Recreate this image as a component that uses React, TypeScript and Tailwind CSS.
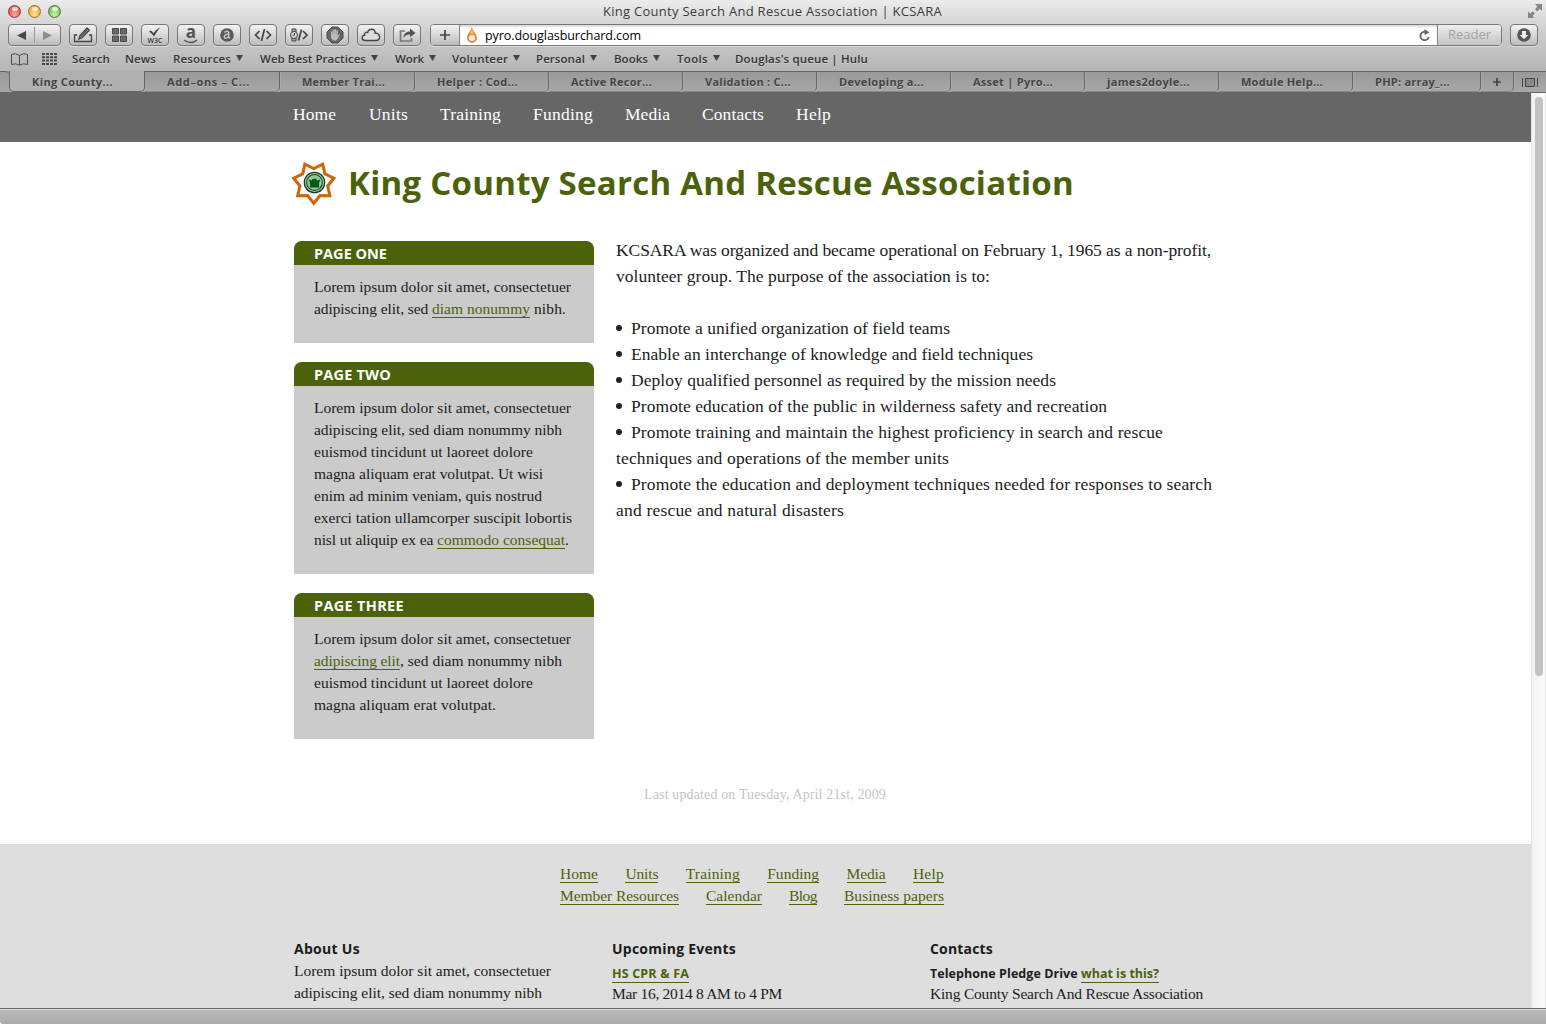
import React, { useLayoutEffect, useRef } from 'react';

/* Single line of text whose tracking is adjusted so that it spans w pixels. */
function Fit({ w, className = '', children }: { w: number; className?: string; children: React.ReactNode }) {
  const ref = useRef<HTMLSpanElement>(null);
  useLayoutEffect(() => {
    const el = ref.current!;
    const apply = () => {
      el.style.letterSpacing = '0px';
      const natural = el.getBoundingClientRect().width;
      const count = (el.textContent || '').length;
      el.style.letterSpacing = (w - natural) / count + 'px';
    };
    apply();
    document.fonts.ready.then(apply);
  }, [w]);
  return (
    <span ref={ref} className={`inline-block whitespace-pre ${className}`}>
      {children}
    </span>
  );
}

const serif = "font-['Liberation_Serif',serif]";
const sans = "font-['Open_Sans','Noto_Sans',sans-serif]";
const link = 'relative text-[#4b620b] after:absolute after:left-0 after:right-0 after:bottom-[2px] after:h-px after:bg-[#4b620b]';

function Tool({ children }: { children: React.ReactNode }) {
  return (
    <div className="mr-2 flex h-[22px] w-7 shrink-0 items-center justify-center rounded-[4px] border border-[#777] bg-linear-to-b from-[#f3f3f3] to-[#bcbcbc] text-[#444] shadow-[0_1px_0_#ddd]">
      {children}
    </div>
  );
}

const bookmarks: [string, number, number, boolean][] = [
  ['Search', 72, 38, false],
  ['News', 125, 31, false],
  ['Resources', 173, 58, true],
  ['Web Best Practices', 260, 106, true],
  ['Work', 395, 29, true],
  ['Volunteer', 452, 56, true],
  ['Personal', 536, 49, true],
  ['Books', 614, 34, true],
  ['Tools', 677, 31, true],
  ["Douglas's queue | Hulu", 735, 133, false],
];

const tabs: [string, number, number][] = [
  ['King County...', 135, 81],
  ['Add–ons – C...', 135, 83],
  ['Member Trai...', 135, 83],
  ['Helper : Cod...', 134, 81],
  ['Active Recor...', 134, 81],
  ['Validation : C...', 134, 86],
  ['Developing a...', 134, 85],
  ['Asset | Pyro...', 134, 80],
  ['james2doyle...', 134, 83],
  ['Module Help...', 134, 82],
  ['PHP: array_...', 128, 75],
];

const nav: [string, number, number][] = [
  ['Home', 43, 293],
  ['Units', 39, 369],
  ['Training', 61, 440],
  ['Funding', 60, 533],
  ['Media', 45, 625],
  ['Contacts', 62, 702],
  ['Help', 35, 796],
];

function Chrome() {
  return (
    <header className={`h-[93px] bg-linear-to-b from-[#ececec] via-[#c9c9c9] via-40% to-[#a9a9a9] ${sans} text-[#3b3b3b]`}>
      <div className="relative flex h-6 items-start pl-2 pt-[5px]">
        <div className="flex gap-[7px]">
          <span className="flex size-[13px] justify-center rounded-full border border-[#9c3430] bg-radial-[at_50%_80%] from-[#ffaaa2] to-[#d93b39] pt-px"><i className="h-1 w-1.5 rounded-full bg-white/70" /></span>
          <span className="flex size-[13px] justify-center rounded-full border border-[#a8691f] bg-radial-[at_50%_80%] from-[#ffe58d] to-[#e8952c] pt-px"><i className="h-1 w-1.5 rounded-full bg-white/70" /></span>
          <span className="flex size-[13px] justify-center rounded-full border border-[#4c7b35] bg-radial-[at_50%_80%] from-[#cdf5a5] to-[#62ad48] pt-px"><i className="h-1 w-1.5 rounded-full bg-white/70" /></span>
        </div>
        <div className="absolute left-[603px] top-[2px] text-[13px] leading-[19px]">
          <Fit w={339}>King County Search And Rescue Association | KCSARA</Fit>
        </div>
        <svg className="absolute left-[1527px] top-1" width="16" height="15" viewBox="0 0 16 15" fill="#858585">
          <path d="M8 0h7v7l-2.200-2.200L10.200 7.400 8 5.200l2.400-2.600zM1 7.500l2.200 2.200L5.600 7.300 7.800 9.500l-2.400 2.400L7.500 14H1z" />
        </svg>
      </div>

      <div className="flex h-6 pl-2">
        <div className="mr-2 flex h-[22px] w-[53px] shrink-0 items-center rounded-[4px] border border-[#777] bg-linear-to-b from-[#f3f3f3] to-[#bcbcbc] shadow-[0_1px_0_#ddd]">
          <div className="flex h-4 w-[26px] items-center justify-center border-r border-[#999]">
            <svg width="9" height="9" viewBox="0 0 9 9"><path d="M9 0v9L0 4.500z" fill="#484848" /></svg>
          </div>
          <div className="flex w-6 items-center justify-center">
            <svg width="9" height="9" viewBox="0 0 9 9"><path d="M0 0v9l9-4.500z" fill="#8d8d8d" /></svg>
          </div>
        </div>
        <Tool>
          <svg width="20" height="16" viewBox="0 0 20 16" fill="none" stroke="#444" strokeWidth="1.300">
            <path d="M4 8H1.500v6.500h17V8H16" /><path d="M6 12l1-3.500L14 1l2.300 2.200L9.200 10.500z" fill="#999" /><path d="M8 9.500l6.500-7" strokeWidth="1" />
          </svg>
        </Tool>
        <Tool>
          <svg width="15" height="14" viewBox="0 0 15 14" fill="#686868" stroke="#4d4d4d"><path d="M.5.500h6v5.500h-6zM8.500.500h6v5.500h-6zM.5 8h6v5.500h-6zM8.500 8h6v5.500h-6z" /></svg>
        </Tool>
        <Tool>
          <div className="flex flex-col items-center pt-px">
            <svg width="12" height="10" viewBox="0 0 12 10"><path d="M0 4.500l2-1 2.500 2.700Q7.500 2 11.500 0 8 4 5 9.500 3 6.500 0 4.500z" fill="#444" /></svg>
            <span className="text-[7px] leading-[8px] text-black">W3C</span>
          </div>
        </Tool>
        <Tool>
          <div className="flex flex-col items-center">
            <span className="h-[13px] text-[17px] font-bold leading-[10px] text-[#555]">a</span>
            <svg className="-mt-px" width="16" height="5" viewBox="0 0 16 5" fill="none" stroke="#555" strokeWidth="1.500"><path d="M1 1q7 5 13 0" /></svg>
          </div>
        </Tool>
        <Tool>
          <svg width="14" height="14" viewBox="0 0 14 14" fill="none"><circle cx="7" cy="7" r="6.800" fill="#5a5a5a" /><path d="M4.300 4.500Q7 2 8.700 4.300V9.500l1.500.5M8.500 6.300C4 6 3.200 10 5.500 10.300q2 0 3-1.800" stroke="#c8c8c8" strokeWidth="1.400" /></svg>
        </Tool>
        <Tool>
          <svg width="18" height="12" viewBox="0 0 18 12" fill="none" stroke="#444" strokeWidth="1.700"><path d="M5.500 2L1.500 6l4 4M12.500 2l4 4-4 4M10.500 0l-3 12" /></svg>
        </Tool>
        <Tool>
          <svg width="20" height="14" viewBox="0 0 20 14" fill="none" stroke="#444"><path d="M3 4V1h4v3M3 10v3h4v-3" fill="#aaa" /><circle cx="5" cy="7" r="3.500" /><path d="M5.500 5v2.200H3.500" /><path d="M12.500 1.500l-3 11M14 3l4 4-4 4" strokeWidth="1.700" /></svg>
        </Tool>
        <Tool>
          <svg width="18" height="18" viewBox="0 0 18 18"><path d="M6 1h6l5 5v6l-5 5H6l-5-5V6z" fill="#666" stroke="#4a4a4a" /><path d="M5 8V5.500h1.300V8h.3V3.800h1.600V8h.3V3.300h1.600V8h.3V4.300h1.400V9.500l1.200-1.200h.8l-1.800 4.200-2 2H7.500L5 12z" fill="#bbb" /></svg>
        </Tool>
        <Tool>
          <svg width="20" height="14" viewBox="0 0 20 14" fill="#ddd" stroke="#444" strokeWidth="1.400"><path d="M4.500 12.500C0 12.500.500 7.200 3.600 7.200 3 4.500 5.500 3.500 6.600 4.600 7.500.300 14-.300 14.200 5.200c5.300-.700 6 7.300.800 7.300z" /></svg>
        </Tool>
        <Tool>
          <svg width="17" height="14" viewBox="0 0 17 14" fill="none"><path d="M6 3H1.500v10h11v-3" stroke="#777" strokeWidth="1.700" /><path d="M4.500 10C4.500 6 7 3.500 11 3.500V.500L16.500 5 11 9.300V6.500C8 6.500 6 7.500 4.500 10z" fill="#555" /></svg>
        </Tool>
        <div className="ml-px flex h-[22px] w-[1072px] shrink-0 overflow-hidden rounded-[4px] border border-[#777] bg-white shadow-[0_1px_0_#ddd]">
          <div className="flex w-[29px] items-center justify-center border-r border-[#888] bg-linear-to-b from-[#f3f3f3] to-[#bcbcbc]">
            <svg width="10" height="10" viewBox="0 0 10 10"><path d="M5 0v10M0 5h10" stroke="#444" strokeWidth="1.700" /></svg>
          </div>
          <div className="flex flex-1 items-center pl-[7px] shadow-[inset_0_2px_2px_#ddd]">
            <svg width="10" height="16" viewBox="0 0 10 16"><path d="M5 0C5.500 4 10 7 10 11a5 5 0 0 1-10 0C0 7 4 4 5 0z" fill="#ef7f3a" /><path d="M5 1.500Q4.500 5 2 8 5 5.500 8 8 5.500 4.500 5 1.500z" fill="#ffc04b" /><circle cx="5" cy="11" r="3.100" fill="#fff4ee" /></svg>
            <span className="ml-[8px] pt-px text-[12.500px] leading-5 text-black"><Fit w={156}>pyro.douglasburchard.com</Fit></span>
            <svg className="ml-auto mr-[7px]" width="11" height="13" viewBox="0 0 11 13"><path d="M8 3.500A4.200 4.200 0 1 0 9.700 8" fill="none" stroke="#666" strokeWidth="1.800" /><path d="M5.500 0l5 3.500L5.500 6z" fill="#666" /></svg>
          </div>
          <div className="flex w-[64px] items-center justify-center border-l border-[#888] bg-linear-to-b from-[#eee] to-[#c4c4c4] text-[13px] text-[#a3a3a3]">
            <Fit w={43}>Reader</Fit>
          </div>
        </div>
        <div className="ml-2">
          <Tool>
            <svg width="14" height="14" viewBox="0 0 14 14"><circle cx="7" cy="7" r="6.800" fill="#555" /><path d="M5 3h4v4h2.300L7 11.300 2.700 7H5z" fill="#eee" /></svg>
          </Tool>
        </div>
      </div>

      <div className="relative h-[23px] text-[11.500px] font-semibold text-[#333] [text-shadow:0_1px_0_#cfcfcf]">
        <svg className="absolute left-[11px] top-[5px]" width="17" height="13" viewBox="0 0 17 13" fill="none" stroke="#4a4a4a"><path d="M8.500 2.500Q4.500-.700.500 1.500v10q4-1.800 8 .7 4-2.500 8-.7v-10q-4-2.200-8 1zV12" /></svg>
        <svg className="absolute left-[42px] top-[5px]" width="15" height="12" viewBox="0 0 15 12" stroke="#4a4a4a" strokeWidth="2"><path d="M0 1h15M0 4.300h15M0 7.600h15M0 11h15" strokeDasharray="3 1" /></svg>
        {bookmarks.map(([label, x, w, menu]) => (
          <div key={label} className="absolute top-[2px] flex items-center leading-[18px]" style={{ left: x }}>
            <Fit w={w}>{label}</Fit>
            {menu && <svg className="-mt-[2px] ml-[5px]" width="7" height="6" viewBox="0 0 7 6"><path d="M0 0h7L3.500 6z" fill="#444" /></svg>}
          </div>
        ))}
      </div>

      <div className="flex h-[22px] border-b border-[#666] bg-linear-to-b from-[#989898] to-[#a8a8a8] text-[11px] font-bold text-[#444] [text-shadow:0_1px_0_#bbb]">
        <div className="w-[9px] shrink-0 rounded-tr-[4px] border-t border-[#666]" />
        {tabs.map(([label, w, tw], i) => (
          <div
            key={label}
            style={{ width: i === 0 ? w + 1 : w }}
            className={
              i === 0
                ? 'flex shrink-0 rounded-b-[5px] border-x border-b border-[#666] bg-[#b0b0b0] pl-[22px] leading-[22px]'
                : 'flex shrink-0 rounded-br-[5px] border-r border-t border-b border-[#666] border-b-[#888] pl-[22px] leading-[20px] shadow-[1px_0_0_#aaa]'
            }
          >
            <Fit w={tw}>{label}</Fit>
          </div>
        ))}
        <div className="flex w-[33px] shrink-0 items-center justify-center rounded-br-[5px] border-r border-t border-b border-[#666] border-b-[#888] shadow-[1px_0_0_#aaa]">
          <svg width="8" height="8" viewBox="0 0 8 8"><path d="M4 0v8M0 4h8" stroke="#444" strokeWidth="1.700" /></svg>
        </div>
        <div className="flex flex-1 items-center justify-center border-t border-[#666]">
          <svg width="16" height="9" viewBox="0 0 16 9" fill="none" stroke="#444"><path d="M.5 0v9M15.500 0v9M3.500.500h9v8h-9z" fill="#888" /></svg>
        </div>
      </div>
    </header>
  );
}

function Badge() {
  const pts: string[] = [];
  for (let i = 0; i < 14; i++) {
    const a = Math.PI / 2 + (i * Math.PI) / 7;
    const r = i % 2 ? 14.2 : 20.6;
    pts.push(`${22.8 + r * Math.cos(a)},${20.8 + r * Math.sin(a)}`);
  }
  return (
    <svg width="46" height="45" viewBox="0 0 46 45">
      <polygon points={pts.join(' ')} fill="#fff" stroke="#cf6507" strokeWidth="3" />
      <circle cx="23.500" cy="20.500" r="10.800" fill="#173d22" />
      <circle cx="23.500" cy="20.500" r="9" fill="none" stroke="#a9cfae" strokeWidth="1.100" />
      <circle cx="23.500" cy="20.500" r="7.400" fill="#8fc796" />
      <path d="M17.800 17.500l3 1 .9-1.800h3.600l.9 1.800 3-1-1.200 4V25.500h-9v-4z" fill="#0a5a1c" />
    </svg>
  );
}

function Card({ title, w, children }: { title: string; w: number; children: React.ReactNode }) {
  return (
    <section className="w-[300px] overflow-hidden rounded-t-[8px] bg-[#cbcbcb]">
      <h2 className={`h-6 bg-[#4b620b] pl-5 text-[14.500px] font-bold leading-[25px] text-white ${sans}`}>
        <Fit w={w}>{title}</Fit>
      </h2>
      <div className="flex flex-col pb-[23px] pl-5 pt-[11px] text-[15.500px] leading-[22px]">{children}</div>
    </section>
  );
}

function Line({ w, children }: { w: number; children: React.ReactNode }) {
  return <div className="flex"><Fit w={w}>{children}</Fit></div>;
}

function Item({ lines }: { lines: [string, number][] }) {
  return (
    <li>
      {lines.map(([text, w], i) => (
        <div key={text} className="flex items-center">
          {i === 0 && <span className="mr-[9px] size-1.5 rounded-full bg-[#222]" />}
          <Fit w={w}>{text}</Fit>
        </div>
      ))}
    </li>
  );
}

function FootLink({ w, children }: { w: number; children: string }) {
  return <a className={link}><Fit w={w}>{children}</Fit></a>;
}

export default function App() {
  return (
    <div className={`flex h-[1024px] w-[1546px] flex-col overflow-hidden bg-white text-[#1c1c1c] ${serif}`}>
      <Chrome />
      <div className="flex h-[915px]">
        <main className="w-[1531px] overflow-hidden">
          <nav className="relative h-[49px] bg-[#666] text-[17.500px] text-white">
            {nav.map(([t, w, x]) => (
              <a key={t} className="absolute top-[8px] leading-[26px]" style={{ left: x }}><Fit w={w}>{t}</Fit></a>
            ))}
          </nav>
          <div className="h-[702px] pl-[294px]">
            <div className="flex h-[99px] pt-[20px]">
              <div className="-ml-[3px] w-[57px] shrink-0"><Badge /></div>
              <h1 className={`-mt-px text-[33px] font-bold leading-[44px] text-[#4b620b] ${sans}`}>
                <Fit w={726}>King County Search And Rescue Association</Fit>
              </h1>
            </div>
            <div className="flex h-[498px] gap-[22px]">
              <aside className="flex flex-col gap-[19px]">
                <Card title="PAGE ONE" w={73}>
                  <Line w={257}>Lorem ipsum dolor sit amet, consectetuer</Line>
                  <div className="flex"><Fit w={118}>{'adipiscing elit, sed '}</Fit><FootLink w={98}>diam nonummy</FootLink><Fit w={36}>{' nibh.'}</Fit></div>
                </Card>
                <Card title="PAGE TWO" w={77}>
                  <Line w={257}>Lorem ipsum dolor sit amet, consectetuer</Line>
                  <Line w={248}>adipiscing elit, sed diam nonummy nibh</Line>
                  <Line w={219}>euismod tincidunt ut laoreet dolore</Line>
                  <Line w={229}>magna aliquam erat volutpat. Ut wisi</Line>
                  <Line w={228}>enim ad minim veniam, quis nostrud</Line>
                  <Line w={258}>exerci tation ullamcorper suscipit lobortis</Line>
                  <div className="flex"><Fit w={123}>{'nisl ut aliquip ex ea '}</Fit><FootLink w={128}>commodo consequat</FootLink><span>.</span></div>
                </Card>
                <Card title="PAGE THREE" w={90}>
                  <Line w={257}>Lorem ipsum dolor sit amet, consectetuer</Line>
                  <div className="flex"><FootLink w={86}>adipiscing elit</FootLink><Fit w={162}>, sed diam nonummy nibh</Fit></div>
                  <Line w={219}>euismod tincidunt ut laoreet dolore</Line>
                  <Line w={182}>magna aliquam erat volutpat.</Line>
                </Card>
              </aside>
              <article className="-mt-[4px] text-[17.500px] leading-[26px]">
                <Line w={595}>KCSARA was organized and became operational on February 1, 1965 as a non-profit,</Line>
                <Line w={374}>volunteer group. The purpose of the association is to:</Line>
                <ul className="mt-[26px]">
                  <Item lines={[['Promote a unified organization of field teams', 319]]} />
                  <Item lines={[['Enable an interchange of knowledge and field techniques', 402]]} />
                  <Item lines={[['Deploy qualified personnel as required by the mission needs', 425]]} />
                  <Item lines={[['Promote education of the public in wilderness safety and recreation', 476]]} />
                  <Item lines={[['Promote training and maintain the highest proficiency in search and rescue', 532], ['techniques and operations of the member units', 333]]} />
                  <Item lines={[['Promote the education and deployment techniques needed for responses to search', 581], ['and rescue and natural disasters', 228]]} />
                </ul>
              </article>
            </div>
            <p className="flex pl-[350px] pt-[45px] text-[14px] leading-[22px] text-[#c4c4c4]">
              <Fit w={242}>Last updated on Tuesday, April 21st, 2009</Fit>
            </p>
          </div>
          <footer className="h-[164px] bg-[#dedede] pt-[19px] text-[15.500px] leading-[22px]">
            <div className="ml-[560px] flex w-[384px] flex-col">
              <div className="flex justify-between">
                <FootLink w={38}>Home</FootLink><FootLink w={33}>Units</FootLink><FootLink w={54}>Training</FootLink>
                <FootLink w={52}>Funding</FootLink><FootLink w={39}>Media</FootLink><FootLink w={31}>Help</FootLink>
              </div>
              <div className="flex justify-between">
                <FootLink w={119}>Member Resources</FootLink><FootLink w={56}>Calendar</FootLink><FootLink w={28}>Blog</FootLink><FootLink w={100}>Business papers</FootLink>
              </div>
            </div>
            <div className="ml-[294px] mt-[31px] grid grid-cols-[318px_318px_318px]">
              <section>
                <h3 className={`text-[14px] font-bold leading-[22px] ${sans}`}><Fit w={66}>About Us</Fit></h3>
                <Line w={257}>Lorem ipsum dolor sit amet, consectetuer</Line>
                <Line w={248}>adipiscing elit, sed diam nonummy nibh</Line>
              </section>
              <section>
                <h3 className={`text-[14px] font-bold leading-[22px] ${sans}`}><Fit w={124}>Upcoming Events</Fit></h3>
                <div className={`flex pt-[3px] text-[12.500px] font-bold leading-[22px] ${sans}`}><FootLink w={77}>{'HS CPR & FA'}</FootLink></div>
                <div className="-mt-[2px]"><Line w={170}>Mar 16, 2014 8 AM to 4 PM</Line></div>
              </section>
              <section>
                <h3 className={`text-[14px] font-bold leading-[22px] ${sans}`}><Fit w={63}>Contacts</Fit></h3>
                <div className={`flex pt-[3px] text-[12.500px] font-bold leading-[22px] ${sans}`}><Fit w={151}>{'Telephone Pledge Drive '}</Fit><FootLink w={78}>what is this?</FootLink></div>
                <div className="-mt-[2px]"><Line w={273}>King County Search And Rescue Association</Line></div>
              </section>
            </div>
          </footer>
        </main>
        <div className="w-[15px] border-x border-[#e4e4e4] bg-linear-to-r from-[#f1f1f1] to-[#fcfcfc] pl-[3px] pt-1">
          <div className="h-[579px] w-2 rounded-full bg-[#c2c2c2]" />
        </div>
      </div>
      <div className="h-4 rounded-bl-[3px] border-t border-[#666] bg-linear-to-b from-[#bbb] to-[#a9a9a9] shadow-[inset_0_1px_0_#ddd]" />
    </div>
  );
}
